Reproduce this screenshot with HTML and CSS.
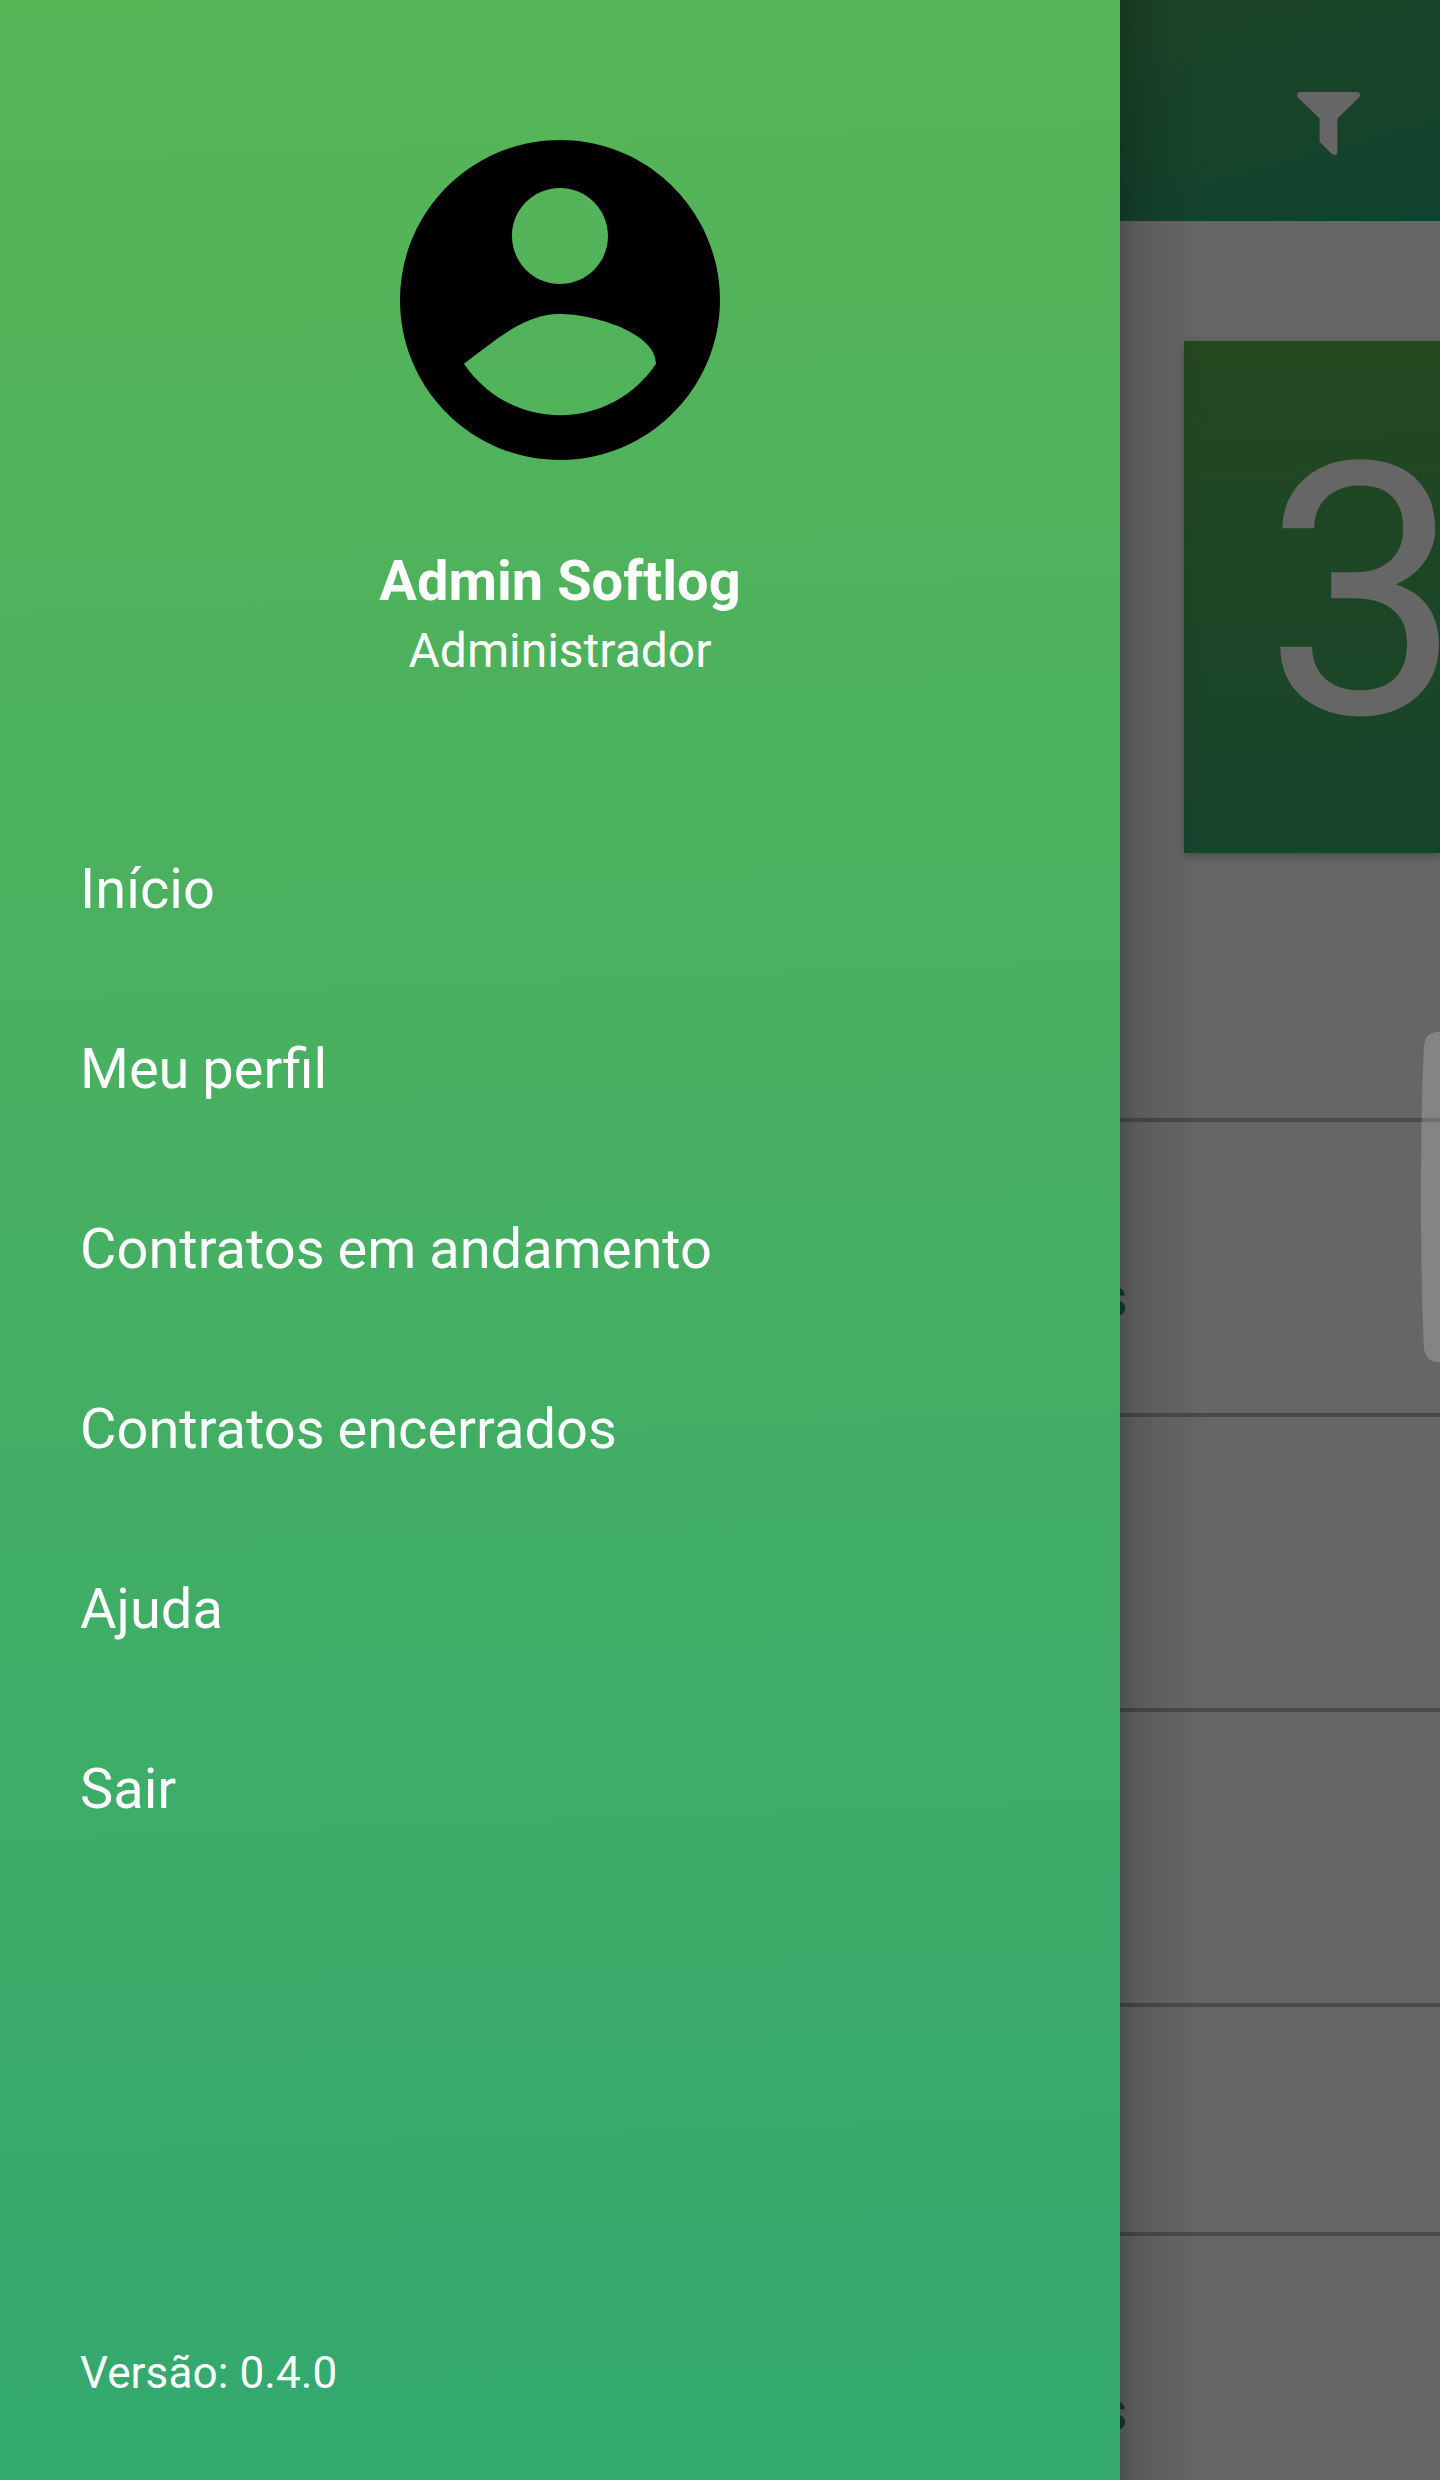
FILE: index.html
```html
<!DOCTYPE html>
<html lang="pt-BR">
<head>
	<meta charset="UTF-8">
	<meta name="viewport" content="width=device-width, initial-scale=1.0" />
	<title>Softlog</title>
	<link rel="stylesheet" href="styles.css">
</head>
<body>

	<div class="screen">
		<aside class="drawer">
			<div class="profile">
				<svg class="avatar" viewBox="2 2 20 20">
					<path d="M12 2C6.48 2 2 6.48 2 12s4.48 10 10 10 10-4.48 10-10S17.52 2 12 2zm0 3c1.66 0 3 1.34 3 3s-1.34 3-3 3-3-1.34-3-3 1.34-3 3-3zm0 14.2c-2.5 0-4.71-1.28-6-3.22 2-1.45 3.7-3.1 6-3.1 1.99 0 5.97 1.11 6 3.1-1.29 1.94-3.5 3.22-6 3.22z"/>
				</svg>
				<h1 class="profile-name">Admin Softlog</h1>
				<p class="profile-role">Administrador</p>
			</div>
			<ul class="menu">
				<li><a href="#inicio">Início</a></li>
				<li><a href="#perfil">Meu perfil</a></li>
				<li><a href="#andamento">Contratos em andamento</a></li>
				<li><a href="#encerrados">Contratos encerrados</a></li>
				<li><a href="#ajuda">Ajuda</a></li>
				<li><a href="#sair">Sair</a></li>
			</ul>
			<p class="version">Versão: 0.4.0</p>
		</aside>

		<main class="page">
			<header class="topbar">
				<svg class="filter" viewBox="0 0 64 64">
					<path d="M3 0H61Q64 0 64 3Q64 4.500 63 5.500L41 27V60Q41 64 38 64Q36.500 64 35 62.500L23 50.500V27L1 5.500Q0 4.500 0 3Q0 0 3 0Z"/>
				</svg>
			</header>
			<div class="card">3</div>
			<ul class="list">
				<li><span>s</span></li>
				<li></li>
				<li></li>
				<li class="short"></li>
				<li><span>s</span></li>
			</ul>
		</main>

		<!-- edge panel handle -->
		<svg class="handle" viewBox="0 0 19 330">
			<path d="M19 0H15Q5 1 3 13Q0 70 0 165T3 317Q5 329 15 330H19Z"/>
		</svg>
	</div>

</body>
</html>
```
FILE: styles.css
```css
*{
	box-sizing:border-box;
}
body{
	margin:0;
	font-family: Roboto, "Liberation Sans", sans-serif;
}
ul{
	list-style:none;
	margin:0;
	padding:0;
}
.screen{
	position:relative;
	display:flex;
	width:1440px;
	height:2480px;
	overflow:hidden;
	background:#666;
}

/* drawer */
.drawer{
	position:relative;
	z-index:1;
	display:flex;
	flex-direction:column;
	flex:none;
	width:1120px;
	color:#fff;
	background:linear-gradient(178deg, #57b556, #33a96f);
}
.drawer:after{
	content:"";
	position:absolute;
	top:0;
	bottom:0;
	left:100%;
	width:88px;
	background:linear-gradient(to right, rgba(0,0,0,.22), rgba(0,0,0,.12) 20%, rgba(0,0,0,.05) 55%, transparent);
}
.profile{
	display:flex;
	flex-direction:column;
	align-items:center;
	height:799px;
	padding-top:140px;
}
.avatar{
	width:320px;
	height:320px;
}
.profile-name{
	margin:88px 0 0;
	font-size:56px;
	line-height:66px;
}
.profile-role{
	margin:9px 0 0;
	font-size:48px;
	line-height:56px;
}
.menu a{
	display:block;
	padding-left:80px;
	font-size:56px;
	line-height:180px;
	word-spacing:-1px;
	color:#fff;
	text-decoration:none;
}
.version{
	margin:auto 0 81px;
	padding-left:80px;
	font-size:44px;
	line-height:52px;
	letter-spacing:.1px;
}

/* page under the drawer */
.page{
	flex:1;
	min-width:0;
}
.topbar{
	height:221px;
	padding:92px 80px 0 0;
	text-align:right;
	background:linear-gradient(165deg, #1d4526, #10422f);
}
.filter{
	width:63px;
	height:63px;
	fill:#666;
}
.card{
	height:512px;
	margin:120px 0 0 64px;
	padding-left:80px;
	font-size:352px;
	line-height:504px;
	color:#666;
	background:linear-gradient(178deg, #24481f, #16442c);
	box-shadow:0 3px 8px rgba(0,0,0,.28);
}
.list{
	margin-top:265px;
}
.list li{
	height:295px;
	padding-top:142px;
	border-top:4px solid #4a4a4a;
}
.list .short{
	height:229px;
}
.list span{
	display:block;
	margin-left:-21px;
	font-size:56px;
	line-height:66px;
	color:#173c33;
}

.handle{
	position:absolute;
	right:0;
	top:1032px;
	width:19px;
	height:330px;
	fill:rgba(255,255,255,.2);
}
```
